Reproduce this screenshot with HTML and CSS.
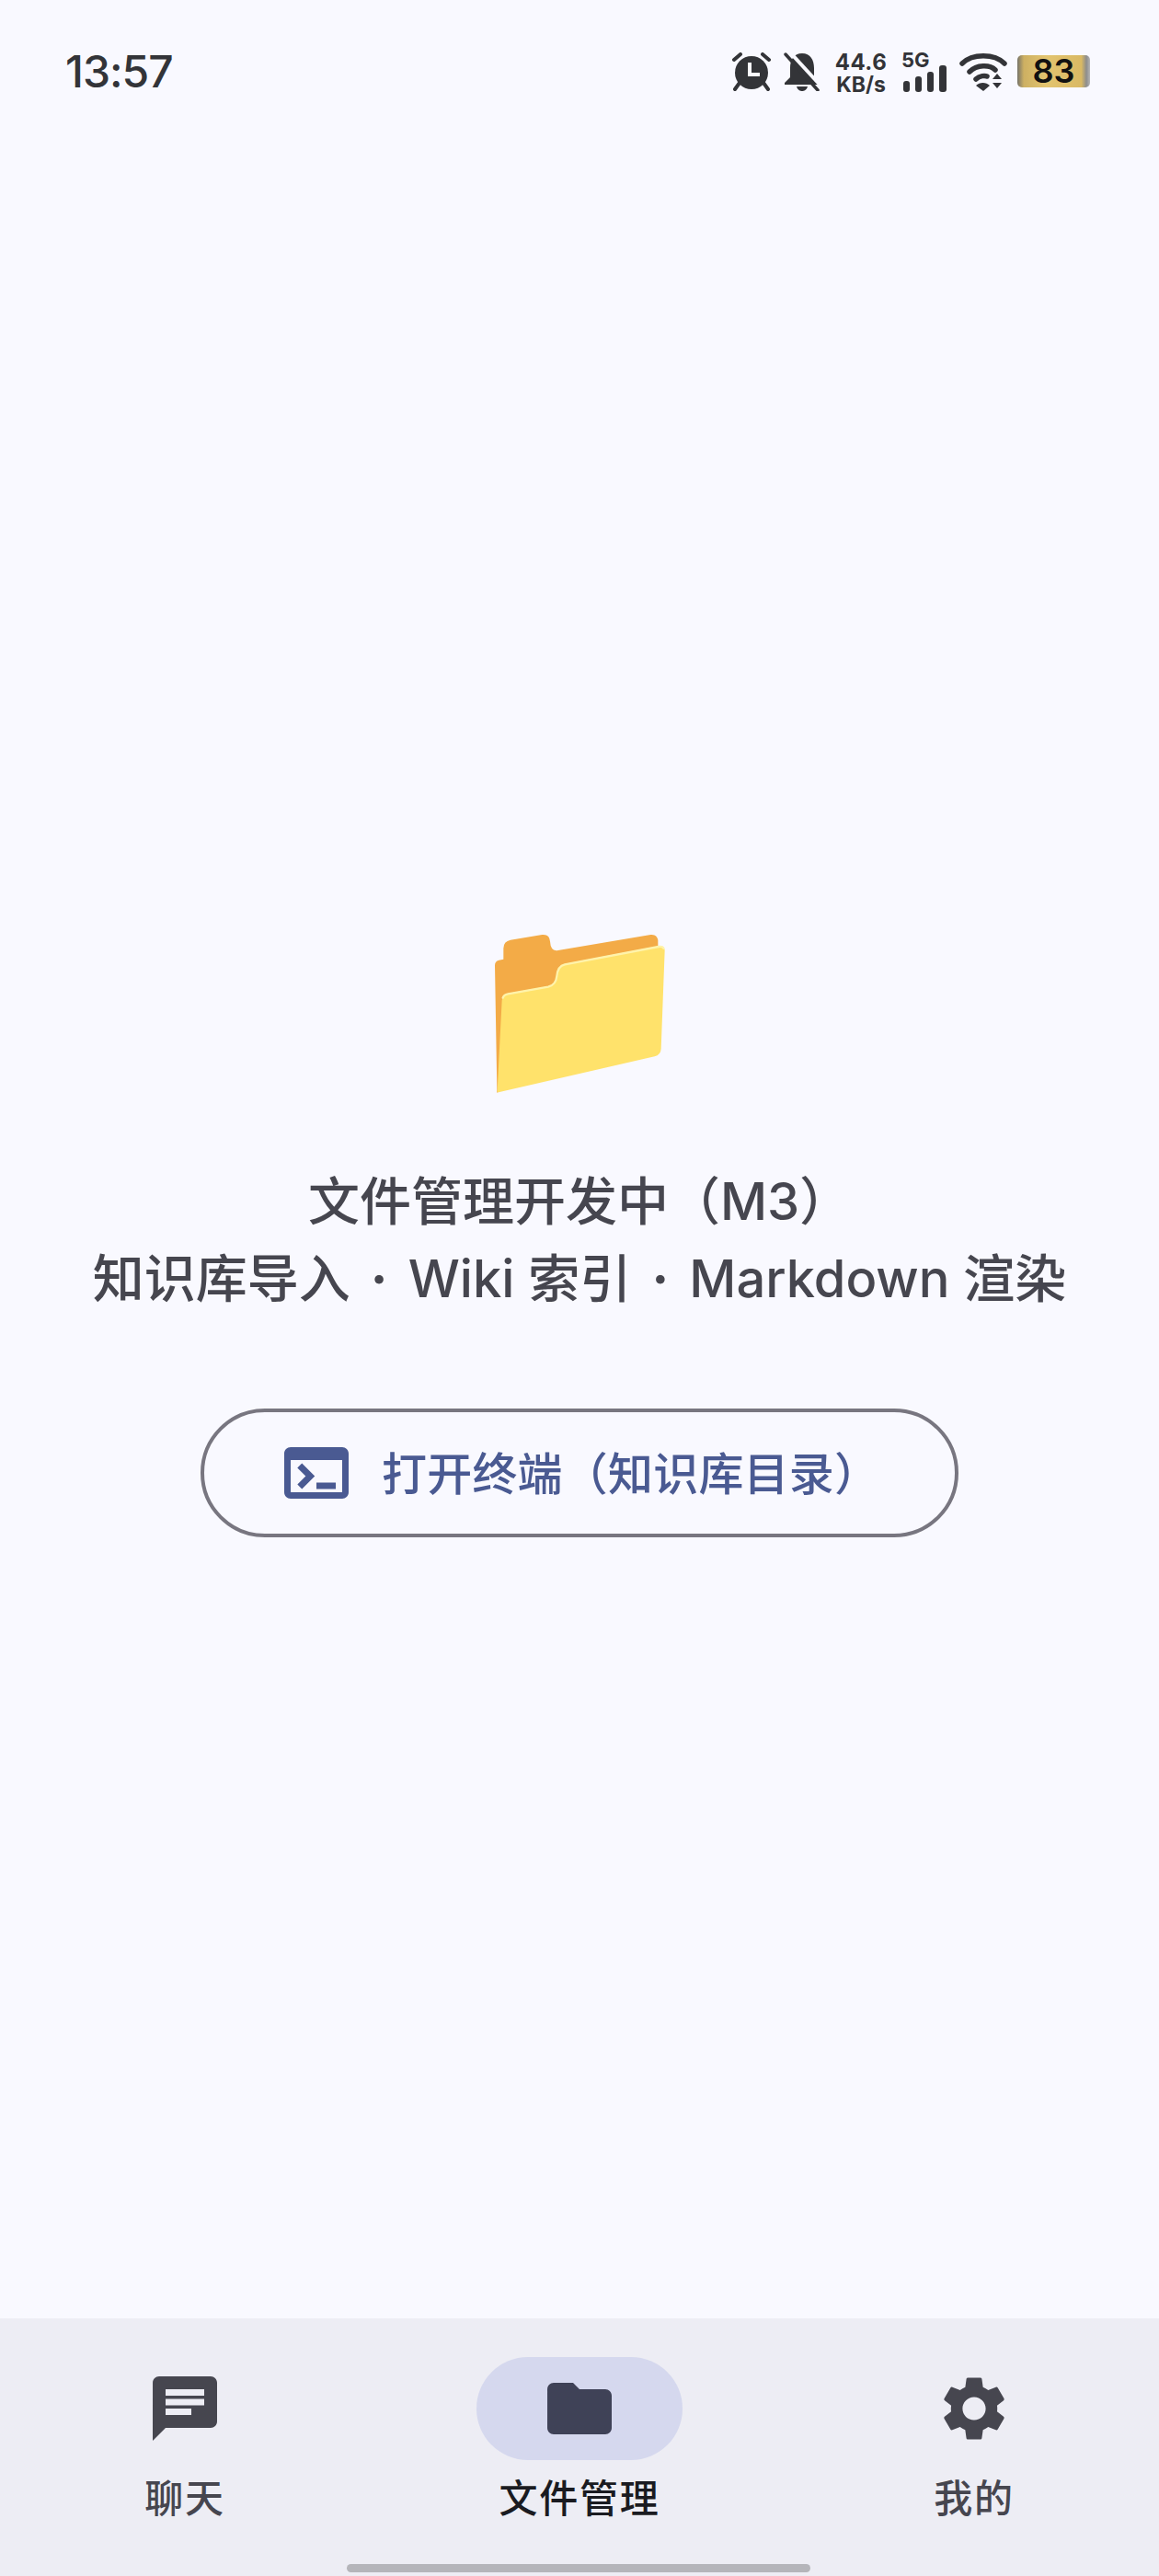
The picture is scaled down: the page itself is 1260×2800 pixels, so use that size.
FILE: index.html
```html
<!DOCTYPE html>
<html lang="zh-CN">
<head>
<meta charset="utf-8">
<title>文件管理</title>
<link rel="stylesheet" href="styles.css">
</head>
<body>
<div class="page">
  <header class="status">
    <span class="time">13:57</span>
    <div class="status-icons">
      <svg class="ic-alarm" viewBox="0 0 42 42" width="42" height="42"><g stroke="#333438" stroke-width="4" stroke-linecap="round"><path d="M2 8 L9 2"/><path d="M40 8 L33 2"/><path d="M8 33 L3 40"/><path d="M34 33 L39 40"/></g><circle cx="21" cy="22" r="18" fill="#333438"/><path d="M19 11 V24 H30" fill="none" stroke="#f9f9ff" stroke-width="4"/></svg>
      <svg class="ic-bell" viewBox="0 0 40 42" width="40" height="42"><path d="M20 1 C11 1 7 8 7 17 V27 L1 33 V35 H37 V33 L33 27 V17 C33 8 29 1 20 1Z" fill="#333438"/><path d="M14 37 H26 C25 41 22 42 20 42 C18 42 15 41 14 37Z" fill="#333438"/><path d="M6 -1 L42 38" stroke="#f9f9ff" stroke-width="4"/><path d="M2 2 L37 41" stroke="#333438" stroke-width="3.5" stroke-linecap="round"/></svg>
      <div class="speed"><span class="speed-num">44.6</span><span class="speed-unit">KB/s</span></div>
      <div class="signal">
        <span class="five-g">5G</span>
        <svg viewBox="0 0 47 29" width="47" height="29"><rect x="0" y="17" width="7" height="12" rx="3" fill="#333438"/><rect x="13" y="12" width="7" height="17" rx="3" fill="#333438"/><rect x="26" y="7" width="7" height="22" rx="3" fill="#333438"/><rect x="39" y="0" width="8" height="29" rx="3" fill="#333438"/></svg>
      </div>
      <svg class="ic-wifi" viewBox="0 0 52 42" width="52" height="42"><g fill="none" stroke="#333438" stroke-width="5.5" stroke-linecap="round"><path d="M3 12 C14 1 38 1 49 12"/><path d="M11 21 C19 13 33 13 39 19"/><path d="M18 29 C22 25 28 25 30 26"/></g><path d="M18 36 L26 42 L33 36 C29 32 22 32 18 36Z" fill="#333438"/><path d="M36 29 L46 29 L41 23Z M36 33 L46 33 L41 39Z" fill="#333438"/></svg>
      <div class="battery"><span>83</span></div>
    </div>
  </header>

  <main class="main">
    <svg class="folder" viewBox="0 0 720 630" width="240" height="210">
      <path d="M84 178 Q84 164 97 161 L112 158 L112 122 Q112 100 135 95 L238 78 Q262 75 264 100 Q266 134 290 129 L592 78 Q612 76 616 95 L616 130 L300 400 L92 593 Q90 594 91 585 Z" fill="#f3ab47"/>
      <path d="M107 292 Q110 272 127 269 L258 246 Q283 240 285 212 Q288 178 312 173 L618 115 Q638 112 638 130 L626 450 Q625 470 605 475 L96 592 Q91 594 92 586 Z" fill="#ffe26b"/>
      <path d="M110 284 Q113 274 127 271 L258 248 Q283 242 286 213 Q289 180 312 175 L618 117 Q630 115 634 122" fill="none" stroke="#fff3ab" stroke-width="7" stroke-linecap="round"/>
    </svg>
    <p class="message">文件管理开发中（M3）<br>知识库导入<span class="dot">·</span>Wiki 索引<span class="dot">·</span>Markdown 渲染</p>
    <button class="terminal-btn" type="button">
      <svg viewBox="2 4 20 16" width="70" height="56"><path d="M20 4H4C2.89 4 2 4.9 2 6v12c0 1.1.89 2 2 2h16c1.1 0 2-.9 2-2V6C22 4.9 21.1 4 20 4zM20 18H4V8h16V18zM18 17h-6v-2h6V17zM7.5 17l-1.41-1.41L8.67 13l-2.59-2.59L7.5 9l4 4L7.5 17z" fill="#4a5a92"/></svg>
      <span class="btn-text">打开终端（知识库目录）</span>
    </button>
  </main>

  <nav class="nav">
    <div class="nav-item">
      <div class="pill"><svg viewBox="0 0 24 24" width="84" height="84"><path d="M20 2H4c-1.1 0-1.99.9-1.99 2L2 22l4-4h14c1.1 0 2-.9 2-2V4c0-1.1-.9-2-2-2zM6 9h12v2H6V9zm8 5H6v-2h8v2zm4-6H6V6h12v2z" fill="#46464f"/></svg></div>
      <span class="nav-label">聊天</span>
    </div>
    <div class="nav-item active">
      <div class="pill"><svg viewBox="0 0 24 24" width="84" height="84"><path d="M10 4H4c-1.1 0-1.99.9-1.99 2L2 18c0 1.1.9 2 2 2h16c1.1 0 2-.9 2-2V8c0-1.1-.9-2-2-2h-8l-2-2z" fill="#3f4257"/></svg></div>
      <span class="nav-label">文件管理</span>
    </div>
    <div class="nav-item">
      <div class="pill"><svg viewBox="0 0 24 24" width="84" height="84"><path fill-rule="evenodd" d="M19.14 12.94c.04-.3.06-.61.06-.94 0-.32-.02-.64-.07-.94l2.03-1.58c.18-.14.23-.41.12-.61l-1.92-3.32c-.12-.22-.37-.29-.59-.22l-2.39.96c-.5-.38-1.03-.7-1.62-.94l-.36-2.54c-.04-.24-.24-.41-.48-.41h-3.84c-.24 0-.43.17-.47.41l-.36 2.54c-.59.24-1.13.57-1.62.94l-2.39-.96c-.22-.08-.47 0-.59.22L2.74 8.87c-.12.21-.08.47.12.61l2.03 1.58c-.05.3-.09.63-.09.94s.02.64.07.94l-2.03 1.58c-.18.14-.23.41-.12.61l1.92 3.32c.12.22.37.29.59.22l2.39-.96c.5.38 1.03.7 1.62.94l.36 2.54c.05.24.24.41.48.41h3.84c.24 0 .44-.17.47-.41l.36-2.54c.59-.24 1.13-.56 1.62-.94l2.39.96c.22.08.47 0 .59-.22l1.92-3.32c.12-.22.07-.47-.12-.61l-2.01-1.58zM12 15.6c-1.98 0-3.6-1.62-3.6-3.6s1.62-3.6 3.6-3.6 3.6 1.62 3.6 3.6-1.62 3.6-3.6 3.6z" fill="#46464f"/></svg></div>
      <span class="nav-label">我的</span>
    </div>
    <div class="home-bar"></div>
  </nav>
</div>
</body>
</html>
```

FILE: styles.css
```css
* { box-sizing: border-box; }
html, body { margin: 0; padding: 0; }
body {
  background: #f9f9ff;
  font-family: "Inter", "Noto Sans CJK SC", sans-serif;
  color: #46464f;
}
.page {
  width: 1260px;
  height: 2800px;
  display: flex;
  flex-direction: column;
}
.status {
  height: 120px;
  flex: none;
  display: flex;
  justify-content: space-between;
  align-items: flex-start;
  padding: 50px 75px 0 71px;
}
.time {
  font-size: 48px;
  line-height: 56px;
  font-weight: 500;
  letter-spacing: -1px;
  color: #333438;
}
.status-icons {
  display: flex;
  align-items: flex-start;
  padding-top: 6px;
}
.status-icons > * { flex: none; }
.ic-alarm { margin-top: 1px; }
.ic-bell { margin: 1px 0 0 14px; }
.speed {
  margin-left: 16px;
  width: 56px;
  display: flex;
  flex-direction: column;
  align-items: center;
  font-weight: 700;
  color: #333438;
}
.speed-num { font-size: 24px; line-height: 24px; letter-spacing: 0.5px; }
.speed-unit { font-size: 23px; line-height: 22px; margin-top: 1px; }
.signal {
  margin-left: 18px;
  width: 47px;
  position: relative;
  height: 44px;
}
.five-g {
  position: absolute;
  left: -2px;
  top: -3px;
  font-size: 22px;
  line-height: 24px;
  font-weight: 700;
  color: #333438;
}
.signal svg { position: absolute; left: 0; top: 15px; }
.ic-wifi { margin: 1px 0 0 14px; }
.battery {
  margin: 4px 0 0 11px;
  width: 79px;
  height: 35px;
  border-radius: 5px;
  background: linear-gradient(90deg, #77746a 0, #cdb062 9%, #e3c46f 40%, #d9b964 88%, #8d8d8d 95%, #b5b5b5 100%);
  display: flex;
  align-items: center;
  justify-content: center;
}
.battery span {
  font-size: 36px;
  line-height: 35px;
  font-weight: 600;
  color: #111;
}
.main {
  flex: 1;
  display: flex;
  flex-direction: column;
  align-items: center;
  justify-content: center;
  padding-top: 20px;
}
.folder { display: block; }
.message {
  margin: 64px 0 0;
  font-size: 56px;
  line-height: 84px;
  font-weight: 500;
  text-align: center;
  color: #46464f;
}
.dot {
  display: inline-block;
  width: 63px;
  text-align: center;
  font-weight: 700;
}
.terminal-btn {
  margin-top: 99px;
  width: 824px;
  height: 140px;
  border: 4px solid #787680;
  border-radius: 70px;
  background: transparent;
  display: flex;
  align-items: center;
  padding: 0 0 0 87px;
  gap: 36px;
  font: inherit;
  font-size: 49px;
  font-weight: 500;
  letter-spacing: 0.2px;
  color: #4a5a92;
}
.terminal-btn svg { flex: none; }
.btn-text { position: relative; top: -2px; }
.nav {
  position: relative;
  height: 280px;
  flex: none;
  background: #ededf4;
  display: flex;
  justify-content: space-between;
  padding: 42px 33px 0;
}
.nav-item {
  width: 336px;
  display: flex;
  flex-direction: column;
  align-items: center;
}
.pill {
  width: 224px;
  height: 112px;
  border-radius: 56px;
  display: flex;
  align-items: center;
  justify-content: center;
}
.active .pill { background: #d5d8ee; }
.nav-label {
  margin-top: 14px;
  font-size: 42px;
  line-height: 56px;
  font-weight: 500;
  letter-spacing: 1.75px;
  color: #46464f;
}
.active .nav-label { color: #1a1b21; }
.home-bar {
  position: absolute;
  left: 377px;
  top: 267px;
  width: 504px;
  height: 9px;
  border-radius: 5px;
  background: #b5b5ba;
}
```
